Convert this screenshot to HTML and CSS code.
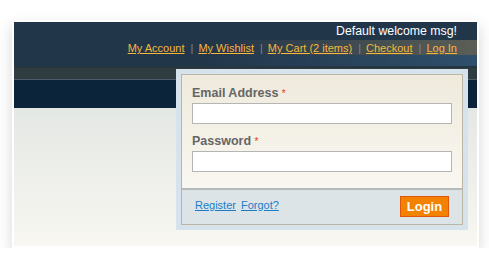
FILE: index.html
```html
<!DOCTYPE html>
<html lang="en">
<head>
  <meta charset="UTF-8">
  <title>Login dropdown</title>
  <link rel="stylesheet" href="styles.css">
</head>
<body>

<div class="frame">
  <!-- Top header with welcome and quick links -->
  <div class="header">
    <div class="welcome">Default welcome msg!</div>
    <div class="links">
      <a href="#">My Account</a><span class="sep">|</span><a href="#">My Wishlist</a><span class="sep">|</span><a href="#">My Cart (2 items)</a><span class="sep">|</span><a href="#">Checkout</a><span class="sep">|</span><a href="#">Log In</a>
    </div>
  </div>
  <div class="strip"></div>
  <div class="nav"></div>
  <div class="content"></div>

  <!-- Login dropdown -->
  <div class="login-drop">
    <form class="login-box">
      <div class="fields">
        <label class="label">Email Address <em>*</em></label>
        <input class="input" type="text">
        <label class="label pw">Password <em>*</em></label>
        <input class="input" type="password">
      </div>
      <div class="actions">
        <div class="small-links">
          <a href="#">Register</a>
          <a href="#">Forgot?</a>
        </div>
        <button class="login-btn" type="button">Login</button>
      </div>
    </form>
  </div>
</div>

</body>
</html>
```

FILE: styles.css
```css
body {
  margin: 0;
  padding: 0;
  background: #fff;
  font-family: "Liberation Sans", Arial, sans-serif;
}

/* Screenshot frame */
.frame {
  position: relative;
  margin: 20px 0 0 12px;
  width: 463px;
  border: 2px solid #fff;
  box-shadow: 0 6px 14px rgba(0, 0, 0, 0.16);
}

.header {
  height: 44px;
  box-sizing: border-box;
  padding: 2px 20px 0;
  text-align: right;
  background:
    linear-gradient(to right, rgba(110, 108, 90, 0) 45%, rgba(110, 108, 90, 0.75) 100%) 0 18px / 100% 15px no-repeat,
    linear-gradient(to right, rgba(50, 85, 115, 0) 40%, rgba(50, 85, 115, 0.8) 100%) 0 33px / 100% 11px no-repeat,
    #22364a;
}

.welcome {
  color: #fff;
  font-size: 12.3px;
  line-height: 15px;
}

.links {
  margin-top: 2px;
  font-size: 11px;
  line-height: 14px;
}

.links a {
  color: #f6b73c;
}

.sep {
  color: #7d8a8c;
  margin: 0 5px 0 6px;
}

.strip {
  height: 13px;
  background: linear-gradient(to bottom, #26353f 0, #26353f 2px, #2f3c40 2px);
  border-bottom: 1px solid #4b5d69;
}

.nav {
  height: 28px;
  background: #0c243a;
}

.content {
  height: 138px;
  background: linear-gradient(to bottom, #e4e8e4, #f8f7f1);
}

/* Dropdown */
.login-drop {
  position: absolute;
  left: 162px;
  top: 47px;
  padding: 5px;
  background: #d6e2ec;
}

.login-box {
  margin: 0;
  width: 280px;
  border: 1px solid #bcb6a5;
}

.fields {
  display: flex;
  flex-direction: column;
  padding: 11px 10px 16px;
  background: linear-gradient(to bottom, #efeadc, #f9f7f1);
  border-bottom: 2px solid #b6babb;
}

.label {
  color: #666;
  font-size: 12.5px;
  font-weight: bold;
  line-height: 15px;
}

.label em {
  color: #eb3b12;
  font-style: normal;
  font-weight: normal;
  font-size: 10px;
  vertical-align: top;
}

.label.pw {
  margin-top: 10px;
}

.input {
  margin-top: 2px;
  height: 21px;
  box-sizing: border-box;
  border: 1px solid #b5b5b5;
  background: #fff;
  padding: 0 3px;
}

.actions {
  display: flex;
  justify-content: space-between;
  align-items: center;
  padding: 6px 13px 7px;
  background: #dde4e8;
}

.small-links {
  display: flex;
  gap: 5px;
  font-size: 11px;
  margin-top: -4px;
}

.small-links a {
  color: #1a7cc6;
}

.login-btn {
  width: 49px;
  height: 21px;
  padding: 0;
  border: 1px solid #e0560a;
  background: #f28200;
  color: #fff;
  font-family: "Liberation Sans", Arial, sans-serif;
  font-size: 13px;
  font-weight: bold;
}
```
